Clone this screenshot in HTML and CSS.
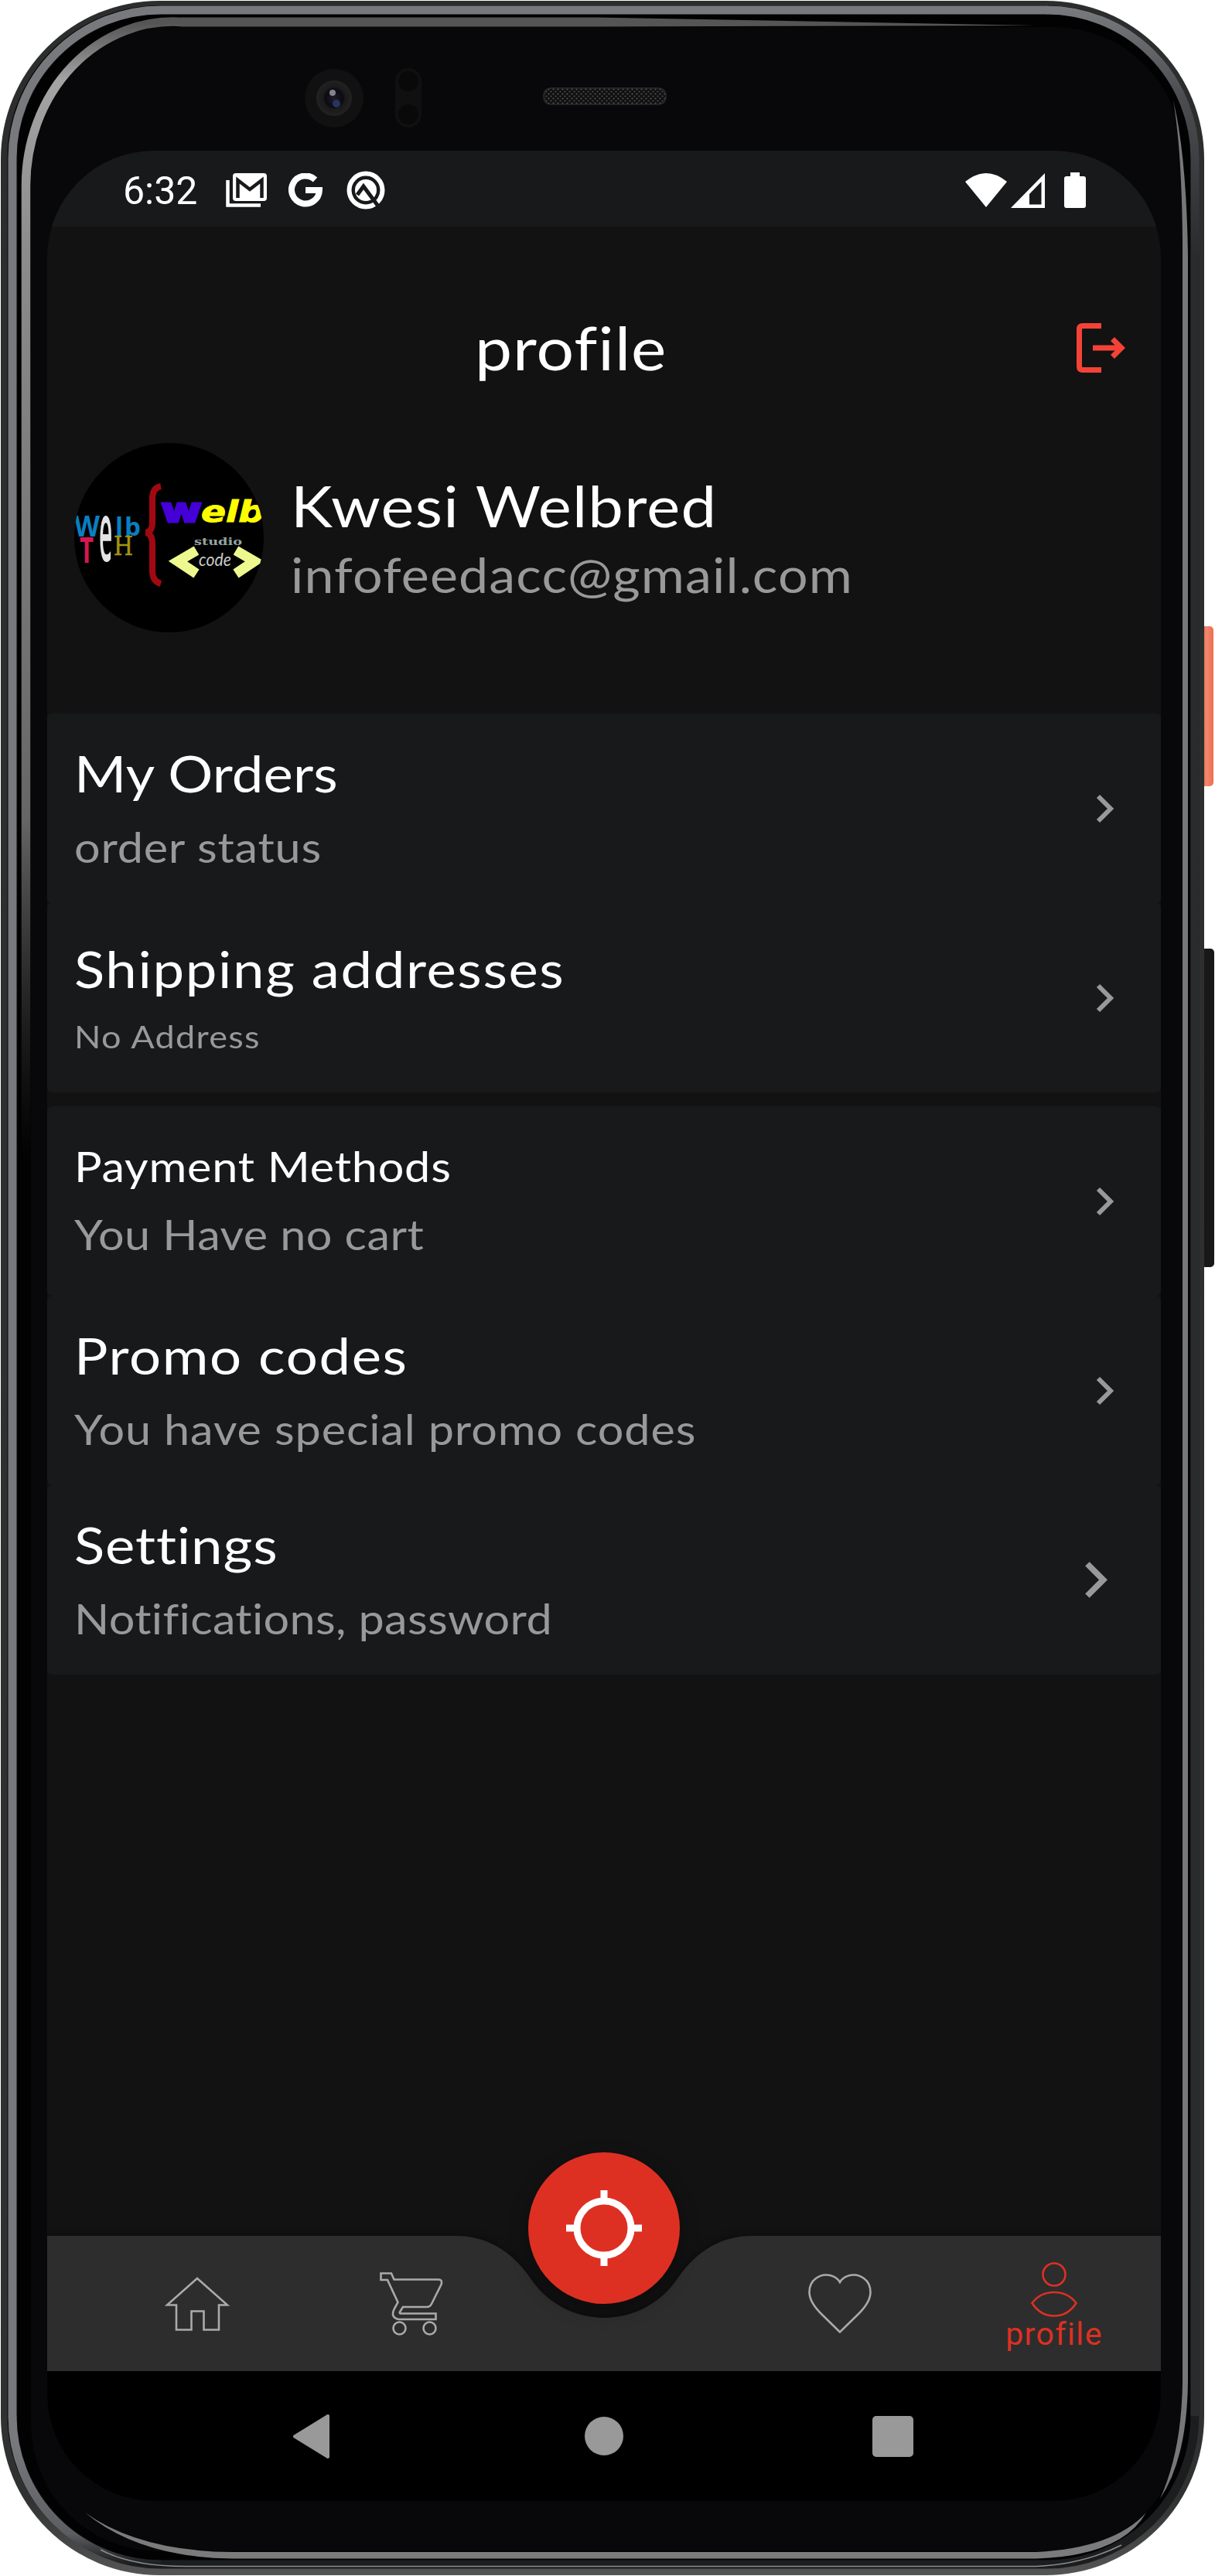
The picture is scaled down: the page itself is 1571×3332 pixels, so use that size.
FILE: index.html
```html
<!DOCTYPE html>
<html lang="en">
<head>
<meta charset="utf-8">
<title>Profile</title>
<link rel="stylesheet" href="styles.css">
</head>
<body>
<div class="phone">
  <svg class="frame" viewBox="0 0 1571 3332" aria-hidden="true">
    <defs>
      <linearGradient id="rim" x1="0" y1="0" x2="0" y2="1">
        <stop offset="0" stop-color="#2c2d2d"/><stop offset=".97" stop-color="#303131"/><stop offset="1" stop-color="#555"/>
      </linearGradient>
      <linearGradient id="metalLow" gradientUnits="userSpaceOnUse" x1="0" y1="3160" x2="0" y2="3317">
        <stop offset="0" stop-color="#77797d"/><stop offset=".75" stop-color="#5c5d61"/><stop offset="1" stop-color="#1c1d1f"/>
      </linearGradient>
      <linearGradient id="metalHigh" gradientUnits="userSpaceOnUse" x1="0" y1="13" x2="0" y2="330">
        <stop offset="0" stop-color="#77797d"/><stop offset=".35" stop-color="#4c4d51"/><stop offset="1" stop-color="#2a2b2d"/>
      </linearGradient>
      <linearGradient id="fadeLeft" gradientUnits="userSpaceOnUse" x1="0" y1="30" x2="0" y2="1500">
        <stop offset="0" stop-color="#555"/><stop offset=".05" stop-color="#a4a4a4"/><stop offset=".2" stop-color="#8c8c8c"/><stop offset=".7" stop-color="#666"/><stop offset="1" stop-color="#333" stop-opacity="0"/>
      </linearGradient>
      <linearGradient id="power" x1="0" y1="0" x2="1" y2="0">
        <stop offset="0" stop-color="#e0573c"/><stop offset=".45" stop-color="#f08a70"/><stop offset="1" stop-color="#ef6c50"/>
      </linearGradient>
      <radialGradient id="lens"><stop offset="0" stop-color="#1c1c2c"/><stop offset=".5" stop-color="#0b0b12"/><stop offset=".62" stop-color="#1a1a1b"/><stop offset="1" stop-color="#222223"/></radialGradient>
      <pattern id="mesh" width="6" height="6" patternUnits="userSpaceOnUse">
        <rect width="6" height="6" fill="#101010"/><circle cx="1.5" cy="1.5" r="1.1" fill="#555"/><circle cx="4.5" cy="4.5" r="1.1" fill="#4a4a4a"/>
      </pattern>
    </defs>
    <rect x="1553" y="810" width="16" height="207" rx="5" fill="url(#power)"/>
    <rect x="1553" y="1227" width="17" height="412" rx="5" fill="#181818"/>
    <rect x="1" y="1" width="1556" height="3330" rx="205" fill="url(#rim)"/>
    <rect x="9.500" y="7" width="1540" height="3314" rx="197" fill="#08080a"/>
    <g fill="none" stroke-width="11">
      <path d="M16 3126V205A192 192 0 0 1 208 13H1354" stroke="#77797d"/>
      <path d="M1353 13A192 192 0 0 1 1545 205V331" stroke="url(#metalHigh)"/>
      <path d="M1545 330V3125A192 192 0 0 1 1353 3317H207" stroke="#1c1d1f"/>
      <path d="M1545 330V3125" stroke="#2a2b2d"/>
      <path d="M208 3317A192 192 0 0 1 16 3125" stroke="url(#metalLow)"/>
    </g>
    <path d="M130 3298Q170 3319.500 240 3319.500H1340Q1400 3317 1450 3292" fill="none" stroke="#8c8e90" stroke-width="1.500"/>
    <rect x="23" y="19" width="1516" height="3292" rx="186" fill="#020203"/>
    <rect x="40" y="35" width="1488" height="3265" rx="165" fill="#08080a"/>
    <path d="M33.500 1500V240A190 212 0 0 1 235 28.500" fill="none" stroke="url(#fadeLeft)" stroke-width="11.500"/>
    <path d="M234 22.500H771L1340 33L771 34.500H234z" fill="#555"/>
    <path d="M1517 130Q1529 200 1529 330V3080Q1528 3170 1500 3232Q1535 3180 1536 3080V330Q1534 200 1517 130z" fill="#777"/>
    <path d="M110 3250Q180 3300 300 3301H1340Q1440 3296 1482 3250Q1450 3306 1340 3309.500H300Q180 3308 110 3250z" fill="#7b7b7b"/>
    <circle cx="432" cy="127" r="38" fill="#111112"/>
    <circle cx="432" cy="127" r="23" fill="url(#lens)"/>
    <circle cx="430" cy="120" r="4" fill="#83838c"/>
    <circle cx="435" cy="134" r="5" fill="#28345e"/>
    <rect x="511" y="88" width="34" height="77" rx="17" fill="#101011"/>
    <circle cx="528" cy="105" r="13" fill="#09090a"/>
    <circle cx="528" cy="148" r="13" fill="#09090a"/>
    <rect x="703" y="114" width="158" height="21" rx="9" fill="url(#mesh)" stroke="#2b2b2b" stroke-width="1.500"/>
  </svg>

  <main class="screen">
    <header class="status">
      <span class="clock">6:32</span>
      <svg class="ic-mail" viewBox="0 0 53 44"><path d="M2.500 9V41.500H45" fill="none" stroke="#fff" stroke-width="4.500"/><rect x="9" width="44" height="36" rx="4" fill="#fff"/><path d="M15.500 32V9L31 21L46.500 9V32" fill="none" stroke="#17191a" stroke-width="4.500"/></svg>
      <svg class="ic-g" viewBox="0 0 44 44"><path d="M34.500 8.500A18 18 0 1 0 40 22H22" fill="none" stroke="#fff" stroke-width="8"/></svg>
      <svg class="ic-q" viewBox="0 0 50 50"><circle cx="25" cy="25" r="21.500" fill="none" stroke="#fff" stroke-width="6"/><circle cx="25" cy="25" r="14" fill="#fff"/><path d="M14 31L22 20L42 47" fill="none" stroke="#17191a" stroke-width="5"/></svg>
      <span class="spacer"></span>
      <svg class="ic-wifi" viewBox="0 0 54 44"><path d="M0 11Q27 -11 54 11L27 44z" fill="#fff"/></svg>
      <svg class="ic-cell" viewBox="0 0 44 45"><path fill-rule="evenodd" d="M44 0V45H0zM39.500 11L24 27V40.500H39.500z" fill="#fff"/></svg>
      <svg class="ic-bat" viewBox="0 0 28 46"><path d="M8 0H20V5H25Q28 5 28 8V43Q28 46 25 46H3Q0 46 0 43V8Q0 5 3 5H8z" fill="#fff"/></svg>
    </header>

    <div class="appbar">
      <h1 class="title"><span>profile</span></h1>
      <svg class="logout" viewBox="0 0 63 64" fill="none" stroke="#f44336" stroke-width="7"><path d="M32 3.500H8Q3.500 3.500 3.500 8V56Q3.500 60.500 8 60.500H32M21 32H57"/><path d="M46.500 20.500L58 32L46.500 43.500"/></svg>
    </div>

    <section class="user">
      <svg class="avatar" viewBox="0 0 245 245">
        <defs><clipPath id="round"><circle cx="122.500" cy="122.500" r="122.500"/></clipPath></defs>
        <g clip-path="url(#round)">
          <rect width="245" height="245"/>
          <text x="0" y="121" textLength="33" lengthAdjust="spacingAndGlyphs" class="a-sans" font-size="37" font-weight="700" fill="#0a7fc0">W</text>
          <text transform="translate(32 153) scale(.48 1)" class="a-sans" font-size="106" font-weight="600" textLength="36" lengthAdjust="spacingAndGlyphs" fill="#e4e4e4">e</text>
          <text x="53" y="120" class="a-sans" font-size="33" font-weight="700" fill="#0a7fc0" textLength="33">lb</text>
          <text x="7" y="155" class="a-sans" font-size="47" font-weight="700" fill="#d8174f" textLength="18" lengthAdjust="spacingAndGlyphs">T</text>
          <text x="51" y="145" class="a-serif" font-size="33" fill="#a39412" stroke="#a39412" stroke-width=".6" textLength="25" lengthAdjust="spacingAndGlyphs">H</text>
          <path d="M112 56Q101 58 101 72V103Q101 114 93 116Q101 118 101 130V165Q101 179 112 182" fill="none" stroke="#a00912" stroke-width="8"/>
          <text x="112" y="102" class="a-black" font-size="45" fill="#4500d8" stroke="#4500d8" stroke-width="3" textLength="53" lengthAdjust="spacingAndGlyphs">w</text>
          <text x="164" y="102" class="a-black a-slant" font-size="37" fill="#fdfd00" stroke="#fdfd00" textLength="82" lengthAdjust="spacingAndGlyphs">elb</text>
          <text x="155" y="132" class="a-serif" font-weight="700" font-size="13" fill="#96a5a0" textLength="62" lengthAdjust="spacingAndGlyphs">studio</text>
          <path d="M158 139L134 153L158 169M209 139L233 153L209 169" fill="none" stroke="#edf98f" stroke-width="13"/>
          <text x="161" y="159" class="a-slant" font-size="23" fill="#c8c8c8" textLength="42" lengthAdjust="spacingAndGlyphs">code</text>
        </g>
      </svg>
      <div class="who">
        <p class="name"><span>Kwesi Welbred</span></p>
        <p class="mail"><span>infofeedacc@gmail.com</span></p>
      </div>
    </section>

    <section class="group">
      <div class="row">
        <div class="label"><p class="t t-orders"><span>My Orders</span></p><p class="s"><span>order status</span></p></div>
        <svg class="chev" viewBox="0 0 24 38"><path d="M3 3L19 19L3 35"/></svg>
      </div>
      <div class="row tight">
        <div class="label"><p class="t"><span>Shipping addresses</span></p><p class="s small"><span>No Address</span></p></div>
        <svg class="chev" viewBox="0 0 24 38"><path d="M3 3L19 19L3 35"/></svg>
      </div>
    </section>
    <section class="group">
      <div class="row compact">
        <div class="label"><p class="t medium"><span>Payment Methods</span></p><p class="s s-pay"><span>You Have no cart</span></p></div>
        <svg class="chev" viewBox="0 0 24 38"><path d="M3 3L19 19L3 35"/></svg>
      </div>
      <div class="row">
        <div class="label"><p class="t"><span>Promo codes</span></p><p class="s s-promo"><span>You have special promo codes</span></p></div>
        <svg class="chev" viewBox="0 0 24 38"><path d="M3 3L19 19L3 35"/></svg>
      </div>
      <div class="row">
        <div class="label"><p class="t t-set"><span>Settings</span></p><p class="s s-set"><span>Notifications, password</span></p></div>
        <svg class="chev big" viewBox="0 0 24 38"><path d="M3 3L19 19L3 35"/></svg>
      </div>
    </section>

    <nav class="tabs">
      <svg class="tabs-bg" viewBox="0 -40 1441 215"><path class="bar" d="M0 0H528Q587 0 625 55A114 114 0 0 0 815 55Q853 0 912 0H1441V175H0z"/></svg>
      <div class="tab"><svg class="ic-home" viewBox="0 0 84 70"><path d="M42 2L3 36.500H15V68.500H34.500V44.500H50.500V68.500H70V36.500H81z"/></svg></div>
      <div class="tab"><svg class="ic-cart" viewBox="0 0 82 82"><path d="M1.500 1.500H15L18.500 9.500H76Q81.500 9.500 79.500 16L67 41Q65 45 61 45H30L26 51.500Q25 53.500 28 53.500H72.500V61H25Q13 59 19 47L23.500 39L10 10H1.500z"/><circle cx="25.500" cy="72.500" r="8"/><circle cx="64.500" cy="72.500" r="8"/></svg></div>
      <div class="tab"></div>
      <div class="tab"><svg class="ic-heart" viewBox="0 0 82 78"><path d="M41 75.500L18 53Q1.500 37 1.500 24Q1.500 12 10 6Q18 0 28 2Q37 4 41 11Q45 4 54 2Q64 0 72 6Q80.500 12 80.500 24Q80.500 37 64 53z"/></svg></div>
      <div class="tab active"><svg class="ic-user" viewBox="0 0 60 71"><circle cx="30" cy="16" r="14.500"/><path d="M1.500 53Q12 39 30 39Q48 39 58.500 53Q48 69.500 30 69.500Q12 69.500 1.500 53z"/></svg><span class="tab-label">profile</span></div>
      <div class="fab"><svg viewBox="0 0 98 98" fill="none" stroke="#fff" stroke-width="9"><circle cx="49" cy="49" r="35"/><path d="M49 0V14M49 84V98M0 49H14M84 49H98"/></svg></div>
    </nav>

    <div class="sysnav">
      <svg class="back" viewBox="0 0 49 57"><path d="M45 2V55L2 28.500z" fill="#999" stroke="#999" stroke-width="4" stroke-linejoin="round"/></svg>
      <span class="home"></span>
      <span class="recent"></span>
    </div>
  </main>
</div>
</body>
</html>
```

FILE: styles.css
```css
* { box-sizing: border-box; }
body { margin: 0; background: #fff; font-family: Lato, "Open Sans", sans-serif; }
h1, p { margin: 0; font-weight: 400; white-space: nowrap; }
h1 span, p span { display: inline-block; transform: scaleX(1.1); transform-origin: left center; }
svg { display: block; flex: none; }

.phone { position: relative; width: 1571px; height: 3332px; padding: 195px 70px 97px 61px; overflow: hidden; }
.frame { position: absolute; inset: 0; width: 1571px; height: 3332px; }

.screen { position: relative; display: flex; flex-direction: column; width: 1440px; height: 3040px; border-radius: 138px; background: #121212; overflow: hidden; }

.status { display: flex; align-items: center; height: 98px; padding: 4px 97px 0 98px; background: #17191a; color: #fff; }
.clock { width: 133px; padding-top: 2px; font: 400 50px/60px Roboto, sans-serif; }
.ic-mail { width: 53px; height: 44px; margin-right: 28px; }
.ic-g { width: 44px; height: 44px; margin-right: 31px; }
.ic-q { width: 50px; height: 50px; }
.spacer { flex: 1; }
.ic-wifi { width: 54px; height: 44px; margin-right: 5px; }
.ic-cell { width: 44px; height: 45px; margin-right: 25px; }
.ic-bat { width: 28px; height: 46px; }

.appbar { display: flex; justify-content: space-between; height: 280px; padding: 125px 46px 0 553px; }
.title { color: #fff; font-size: 78px; line-height: 62px; letter-spacing: .9px; }
.logout { width: 63px; height: 64px; }

.user { display: flex; gap: 35px; height: 350px; padding: 0 35px; }
.avatar { width: 245px; height: 245px; }
.a-sans { font-family: "Open Sans", sans-serif; }
.a-serif { font-family: "DejaVu Serif", serif; }
.a-black { font-family: "DejaVu Sans", sans-serif; font-weight: 700; }
.a-slant { font-style: italic; }
.who { padding-top: 36px; }
.name { color: #fff; font-size: 74px; line-height: 90px; letter-spacing: 1.1px; }
.mail { color: #999; font-size: 62px; line-height: 88px; letter-spacing: 1px; }

.group { margin-bottom: 18px; }
.row { display: flex; justify-content: space-between; align-items: center; height: 245px; padding: 0 60px 0 35px; border-radius: 6px; background: #17191a; }
.label { align-self: flex-start; padding-top: 37px; }
.t { color: #fff; font-size: 66px; line-height: 80px; letter-spacing: 1.45px; }
.t-orders { letter-spacing: .1px; }
.t-set { letter-spacing: .8px; }
.s { margin-top: 21px; color: #999; font-size: 54px; line-height: 70px; letter-spacing: .7px; }
.s-pay { letter-spacing: .4px; }
.s-promo { letter-spacing: .8px; }
.s-set { letter-spacing: .3px; }
.tight .label { padding-top: 45px; }
.tight .s, .compact .s { margin-top: 13px; }
.compact .label { padding-top: 38px; }
.t.medium { font-size: 54px; letter-spacing: .7px; }
.s.small { font-size: 41px; letter-spacing: 1.15px; }
.chev { width: 24px; height: 38px; fill: none; stroke: #999; stroke-width: 6; }
.chev.big { width: 31px; height: 49px; margin-right: 8px; }

.tabs { position: relative; display: grid; grid-template-columns: repeat(5, 277px); height: 175px; margin-top: auto; padding-left: 55.5px; flex: none; }
.tabs-bg { position: absolute; left: 0; top: -40px; width: 1441px; height: 215px; filter: drop-shadow(0 0 6px rgba(0,0,0,.5)); }
.bar { fill: #2d2d2d; }
.tab { position: relative; display: flex; flex-direction: column; align-items: center; justify-content: center; fill: none; stroke: #aaa; stroke-width: 2.6; }
.ic-home { width: 84px; height: 70px; }
.ic-cart { width: 82px; height: 82px; }
.ic-heart { width: 82px; height: 78px; }
.ic-user { width: 60px; height: 71px; }
.active { padding-top: 7px; stroke: #dd3023; color: #dd3023; }
.tab-label { font: 400 41px/44px Roboto, sans-serif; letter-spacing: 1.4px; }
.fab { position: absolute; left: 622px; top: -108px; display: flex; align-items: center; justify-content: center; width: 196px; height: 196px; border-radius: 50%; background: #dd3023; box-shadow: 0 8px 24px rgba(0,0,0,.35); }
.fab svg { width: 98px; height: 98px; }

.sysnav { display: flex; align-items: center; height: 168px; padding-left: 318px; flex: none; background: #000; }
.back { width: 49px; height: 57px; }
.home { width: 50px; height: 50px; margin-left: 328px; border-radius: 50%; background: #999; }
.recent { width: 53px; height: 53px; margin-left: 322px; border-radius: 5px; background: #999; }
```
